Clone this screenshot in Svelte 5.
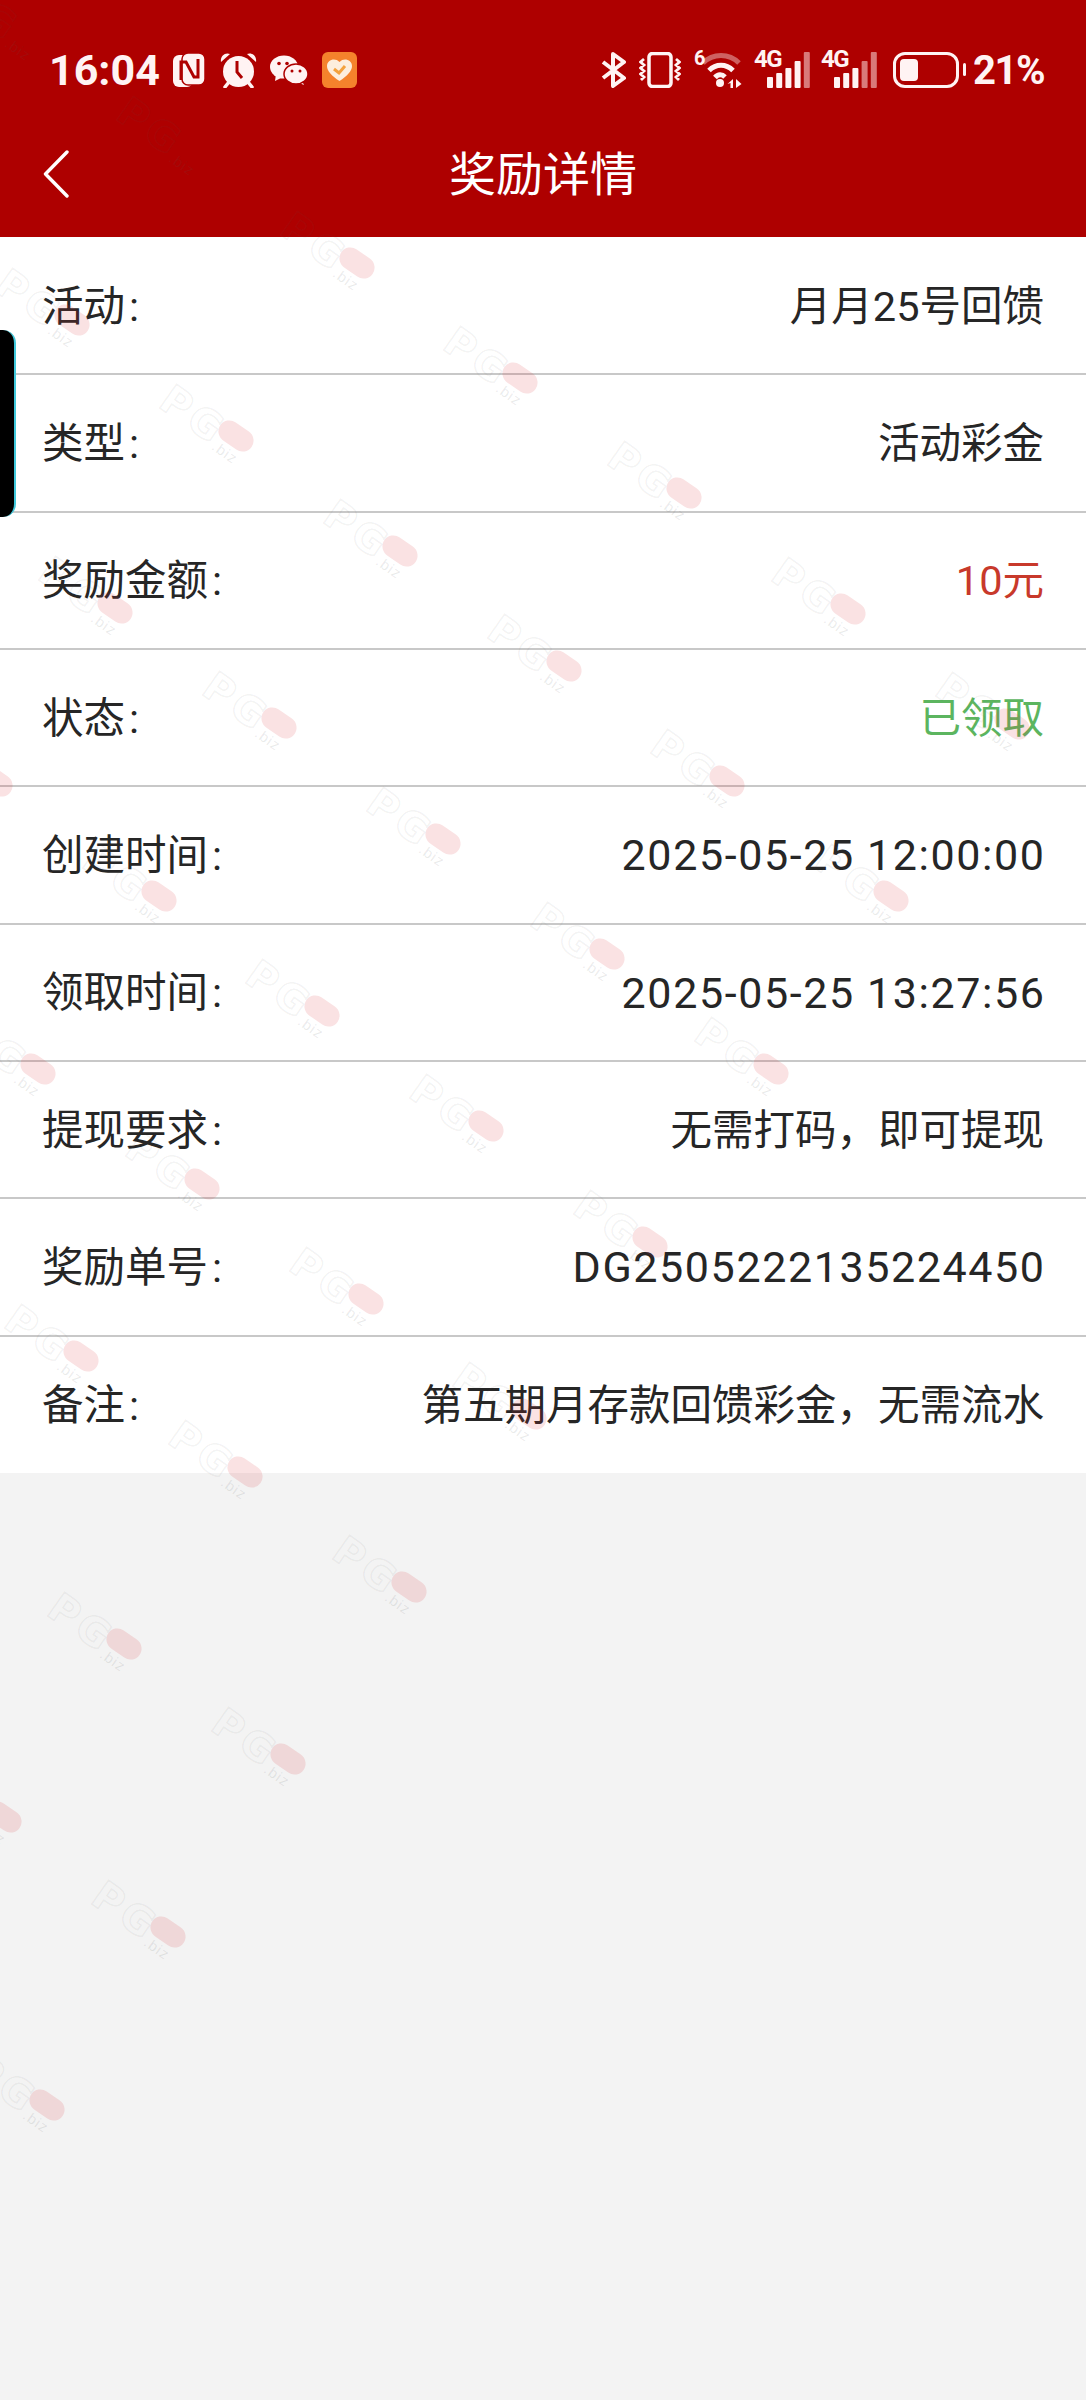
<script lang="ts">
  type Row = { label: string; value: string; tone?: string };

  const rows: Row[] = [
    { label: "活动", value: "月月25号回馈" },
    { label: "类型", value: "活动彩金" },
    { label: "奖励金额", value: "10元", tone: "red" },
    { label: "状态", value: "已领取", tone: "green" },
    { label: "创建时间", value: "2025-05-25 12:00:00", tone: "num" },
    { label: "领取时间", value: "2025-05-25 13:27:56", tone: "num" },
    { label: "提现要求", value: "无需打码，即可提现" },
    { label: "奖励单号", value: "DG2505222135224450", tone: "num" },
    { label: "备注", value: "第五期月存款回馈彩金，无需流水" },
  ];

  // watermark lattice: [row, first column, last column]
  const ranges = [
    [0, -2, 4], [1, 0, 5], [2, 2, 6], [3, 3, 7], [4, 5, 8],
    [5, 7, 9], [6, 9, 10], [7, 10, 11], [8, 12, 12],
  ];
  const marks: { x: number; y: number }[] = [];
  for (const [j, from, to] of ranges) {
    for (let i = from; i <= to; i++) {
      marks.push({
        x: 356.5 + i * 163.8 - j * 284.4,
        y: 263 + i * 115.2 + j * 57.4,
      });
    }
  }

  // bar heights of the two signal icons, dim bars are the unused ones
  const signals = [
    [{ h: 11 }, { h: 15 }, { h: 20 }, { h: 27 }, { h: 36, dim: true }],
    [{ h: 11 }, { h: 15 }, { h: 20 }, { h: 27, dim: true }, { h: 36, dim: true }],
  ];
</script>

<div class="page">
  <header class="top">
    <div class="status">
      <div class="group left">
        <span class="time">16:04</span>
        <svg class="nfc" viewBox="0 0 32 34">
          <rect x="0" y="2" width="20" height="32" rx="6" fill="#fff3f3" />
          <rect x="9" y="0" width="23" height="32" rx="6" fill="#fff3f3" stroke="#ae0000" stroke-width="1.500" />
          <path d="M8 27V9h5l8 15h4V6" fill="none" stroke="#ae0000" stroke-width="3" />
        </svg>
        <svg class="alarm" viewBox="0 0 37 36">
          <path d="M1 10C0 4 5 0 10 2ZM36 10C37 4 32 0 27 2Z" fill="#fff3f3" />
          <path d="M9 30 5 35M28 30l4 5" stroke="#fff3f3" stroke-width="3.500" stroke-linecap="round" />
          <circle cx="18.500" cy="19.500" r="15.500" fill="#fff3f3" />
          <path d="M17 9v11l5 6" fill="none" stroke="#ae0000" stroke-width="3" />
        </svg>
        <svg class="wechat" viewBox="0 0 38 30">
          <ellipse cx="14" cy="12" rx="14" ry="11.500" fill="#fff3f3" />
          <path d="M6 19 5 26l8-4Z" fill="#fff3f3" />
          <path d="M32 26 34 30l-7-3Z" fill="#fff3f3" />
          <ellipse cx="26" cy="19" rx="12" ry="10" fill="#fff3f3" stroke="#ae0000" stroke-width="1.500" />
          <circle cx="9" cy="8.500" r="1.800" fill="#ae0000" />
          <circle cx="17" cy="8.500" r="1.800" fill="#ae0000" />
          <circle cx="22" cy="16" r="1.500" fill="#ae0000" />
          <circle cx="30" cy="16" r="1.500" fill="#ae0000" />
        </svg>
        <svg class="pocket" viewBox="0 0 35 36">
          <rect width="35" height="36" rx="6" fill="#f5822c" />
          <path d="M17.500 29C10 24 5 19 5 14c0-6 8-9 12.500-4C22 5 30 8 30 14c0 5-5 10-12.500 15Z" fill="#fdeedd" />
          <path d="M12 17l5 4 6-7" fill="none" stroke="#f4a23e" stroke-width="3" />
        </svg>
      </div>
      <div class="group right">
        <svg class="bt" viewBox="0 0 26 36">
          <path d="M2 10 23 26 12 34V2l11 8L2 26" fill="none" stroke="#fff3f3" stroke-width="4" stroke-linejoin="round" />
        </svg>
        <svg class="vib" viewBox="0 0 42 36">
          <rect x="10" y="1.500" width="22" height="33" rx="3.500" fill="none" stroke="#fff3f3" stroke-width="3.500" />
          <path d="M5 7 1.500 10 5 13 1.500 16 5 19 1.500 22 5 25 2 28M37 7l3.500 3L37 13l3.500 3L37 19l3.500 3L37 25l3 3" fill="none" stroke="#fff3f3" stroke-width="2.800" />
        </svg>
        <div class="wifi">
          <span class="six">6</span>
          <svg viewBox="0 0 42 36">
            <path d="M3 11C13 1 29 1 39 11" fill="none" stroke="#fff3f3" stroke-opacity=".4" stroke-width="5" />
            <path d="M9 18.500C16 11.500 26 11.500 33 18.500M15 25.500C18 22 22 22 25 25" fill="none" stroke="#fff3f3" stroke-width="5" />
            <circle cx="20" cy="31" r="4" fill="#fff3f3" />
            <path d="M33 27v9h-2.500v-5l-3 1ZM36 27l5.500 5-5.500 4Z" fill="#fff3f3" />
          </svg>
        </div>
        {#each signals as bars, n}
          <div class="signal" class:second={n === 1}>
            <span class="net">4G</span>
            <svg viewBox="0 0 57 36">
              {#each bars as bar, b}
                <rect x={13 + b * 9.200} y={36 - bar.h} width="6" height={bar.h} rx="1" fill={bar.dim ? "#d97a7a" : "#fff3f3"} />
              {/each}
            </svg>
          </div>
        {/each}
        <div class="battery">
          <div class="fill"></div>
          <i class="nub"></i>
        </div>
        <span class="pct">21%</span>
      </div>
    </div>
    <nav class="bar">
      <svg class="back" viewBox="0 0 26 48">
        <path d="M24 2 2.500 24 24 46" fill="none" stroke="#fff" stroke-width="3.400" stroke-linecap="round" stroke-linejoin="round" />
      </svg>
      <h1>奖励详情</h1>
    </nav>
  </header>

  <section class="list">
    {#each rows as row}
      <div class="row">
        <span class="label">{row.label}<span class="colon">:</span></span>
        <span class="value {row.tone ?? ''}">{row.value}</span>
      </div>
    {/each}
  </section>

  <div class="tab"></div>

  <div class="marks">
    {#each marks as m}
      <div class="mark" style="left: {m.x}px; top: {m.y}px">
        <span class="pg">PG</span>
        {#if m.y > 237}
          <span class="pill"></span>
        {/if}
        <span class="biz">.biz</span>
      </div>
    {/each}
  </div>
</div>

<style>
  :global(body) {
    margin: 0;
  }

  .page {
    position: relative;
    width: 1086px;
    height: 2400px;
    overflow: hidden;
    background: #f3f3f3;
    font-family: Roboto, "Noto Sans CJK SC", sans-serif;
  }

  .top {
    background: #ae0000;
    height: 237px;
    color: #fff;
  }

  .status {
    height: 110px;
    padding: 30px 42px 0 49px;
    box-sizing: border-box;
    display: flex;
    justify-content: space-between;
    align-items: center;
    color: #fff3f3;
  }

  .group {
    display: flex;
    align-items: center;
  }

  .time {
    font-size: 43px;
    font-weight: 700;
    width: 103px;
    margin-right: 21px;
    white-space: nowrap;
  }

  .nfc { width: 32px; height: 34px; margin-right: 15px; }
  .alarm { width: 37px; height: 36px; margin-right: 13px; }
  .wechat { width: 38px; height: 30px; margin-right: 14px; }
  .pocket { width: 35px; height: 36px; }

  .bt { width: 26px; height: 36px; margin-right: 12px; }
  .vib { width: 42px; height: 36px; margin-right: 13px; }

  .wifi {
    position: relative;
    width: 48px;
    height: 36px;
    margin-right: 12px;
  }

  .wifi svg {
    position: absolute;
    left: 6px;
    top: 0;
    width: 42px;
    height: 36px;
  }

  .six {
    position: absolute;
    left: 0;
    top: -6px;
    font-size: 20px;
    font-weight: 700;
  }

  .signal {
    position: relative;
    width: 57px;
    height: 36px;
    margin-right: 10px;
  }

  .signal.second {
    margin-right: 15px;
  }

  .signal svg {
    position: absolute;
    inset: 0;
    width: 57px;
    height: 36px;
  }

  .net {
    position: absolute;
    left: 0;
    top: -7px;
    font-size: 24px;
    font-weight: 700;
    letter-spacing: -1.500px;
  }

  .battery {
    position: relative;
    width: 66px;
    height: 36px;
    border: 3.500px solid #fff3f3;
    border-radius: 12px;
    box-sizing: border-box;
    margin-right: 14px;
    padding: 4px;
  }

  .fill {
    width: 18px;
    height: 100%;
    background: #fff3f3;
    border-radius: 4px;
  }

  .nub {
    position: absolute;
    right: -10px;
    top: 8px;
    width: 3.500px;
    height: 13px;
    background: #fff3f3;
    border-radius: 2px;
  }

  .pct {
    font-size: 40px;
    font-weight: 700;
    letter-spacing: -1.500px;
  }

  .bar {
    position: relative;
    height: 127px;
    box-sizing: border-box;
    padding-bottom: 6px;
    display: flex;
    align-items: center;
    justify-content: center;
  }

  .back {
    position: absolute;
    left: 43px;
    top: 40px;
    width: 26px;
    height: 48px;
  }

  h1 {
    margin: 0;
    font-size: 47px;
    font-weight: 400;
  }

  .list {
    background: #fff;
    padding-top: 1px;
  }

  .row {
    height: 137.330px;
    box-sizing: border-box;
    padding: 0 42px 6px 42px;
    display: flex;
    justify-content: space-between;
    align-items: center;
    border-bottom: 2px solid #c8c8c8;
    font-size: 41.500px;
    color: #262626;
    white-space: nowrap;
  }

  .row:last-child {
    height: 136.330px;
    border-bottom: 0;
  }

  .colon {
    margin-left: 4px;
  }

  .red { color: #c8392b; }
  .green { color: #5cb55f; }

  .num {
    font-size: 43px;
    letter-spacing: 1.600px;
    margin-right: -1.600px;
    padding-top: 7px;
  }

  .tab {
    position: absolute;
    left: 0;
    top: 330px;
    width: 16px;
    height: 187px;
    box-sizing: border-box;
    background: #000;
    border-right: 2.500px solid #41c9dc;
    border-radius: 0 13px 13px 0;
  }

  .marks {
    position: absolute;
    inset: 0;
    pointer-events: none;
  }

  /* anchored on the pink pill */
  .mark {
    position: absolute;
    width: 0;
    height: 0;
    transform: rotate(35deg);
  }

  .pg {
    position: absolute;
    right: 12px;
    top: -13px;
    font-family: "DejaVu Sans", sans-serif;
    font-size: 40px;
    line-height: 40px;
    font-weight: 700;
    letter-spacing: 4px;
    color: transparent;
    -webkit-text-stroke: 1.500px rgba(90, 90, 90, 0.08);
  }

  .pill {
    position: absolute;
    left: -19px;
    top: -11px;
    width: 38px;
    height: 22px;
    border-radius: 11px;
    background: rgba(220, 50, 60, 0.14);
  }

  .biz {
    position: absolute;
    right: -14px;
    top: 11px;
    font-family: "Liberation Sans", sans-serif;
    font-size: 15px;
    color: rgba(90, 90, 90, 0.12);
    letter-spacing: 1px;
  }
</style>
